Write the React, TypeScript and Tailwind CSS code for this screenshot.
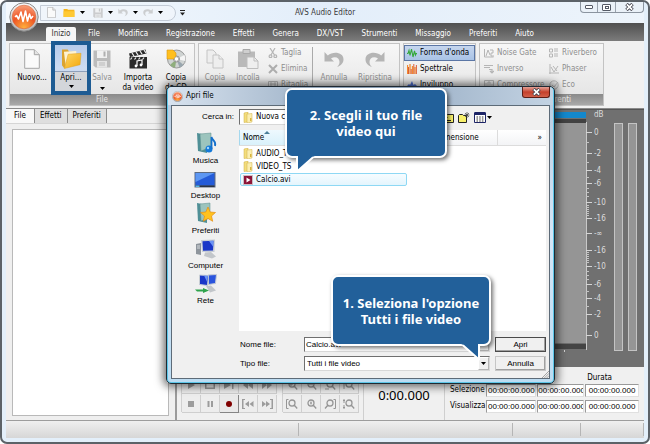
import React, { useState } from 'react';
import clsx from 'clsx';

type IconProps = { className?: string };

function LogoIcon({ className }: IconProps) {
  return (
    <svg viewBox="0 0 30 30" className={className} aria-hidden="true">
      <defs>
        <linearGradient id="ring" x1="0" y1="0" x2="0" y2="1">
          <stop offset="0" stopColor="#fafafa" />
          <stop offset="1" stopColor="#b4b4b4" />
        </linearGradient>
        <radialGradient id="orange" cx="0.5" cy="0.95" r="0.95">
          <stop offset="0" stopColor="#ffb03c" />
          <stop offset="0.55" stopColor="#ee5424" />
          <stop offset="1" stopColor="#f9a27c" />
        </radialGradient>
      </defs>
      <circle cx="15" cy="15" r="14.2" fill="url(#ring)" stroke="#8a8a8a" />
      <circle cx="15" cy="15" r="11.8" fill="url(#orange)" stroke="#d8643a" strokeWidth="0.6" />
      <path d="M6 15l1.500-1.500L9.500 17l2.500-7 2 9.500L16.500 9l2 10 2-7 1.500 4.500L24 14" fill="none" stroke="#fff" strokeWidth="1.6" strokeLinejoin="round" />
    </svg>
  );
}

function PageIcon({ className }: IconProps) {
  return (
    <svg viewBox="0 0 16 20" className={className} aria-hidden="true">
      <path d="M.7.7h9.6l5 5v13.6H.7z" fill="#fafafa" stroke="#a5a5a5" />
      <path d="M10.3.7v5h5" fill="#e4e4e4" stroke="#a5a5a5" />
    </svg>
  );
}

function CopyIcon({ className }: IconProps) {
  return (
    <svg viewBox="0 0 18 20" className={className} fill="#eee" stroke="#c4c4c4" aria-hidden="true">
      <path d="M1 1h6l3 3v10H1z" />
      <path d="M7 6h6l4 4v9H7z" />
      <path d="M13 6v4h4" />
    </svg>
  );
}

function PasteIcon({ className }: IconProps) {
  return (
    <svg viewBox="0 0 22 20" className={className} aria-hidden="true">
      <path d="M1 2.5h17V18H1z" fill="#b9b9b9" />
      <path d="M6 .5h7v4H6z" fill="#cfcfcf" stroke="#a8a8a8" />
      <path d="M10 8h7l4 4v7.5H10z" fill="#eee" stroke="#bdbdbd" />
      <path d="M17 8v4h4" fill="none" stroke="#bdbdbd" />
    </svg>
  );
}

function OpenFolderIcon({ className }: IconProps) {
  return (
    <svg viewBox="0 0 22 21" className={className} aria-hidden="true">
      <defs>
        <linearGradient id="folder" x1="0" y1="0" x2="1" y2="1">
          <stop offset="0" stopColor="#ffd766" />
          <stop offset="1" stopColor="#f2a70c" />
        </linearGradient>
      </defs>
      <path d="M1 .5h6l1.500 2.500H12L3.500 20.500 1 17z" fill="#dba431" />
      <path d="M3 3l13-1v4L5 19z" fill="#fff3d0" />
      <path d="M7.500 5.500L21 4.500l-1 12L3.500 20.500z" fill="url(#folder)" stroke="#e0a01c" strokeWidth="0.5" />
    </svg>
  );
}

function FolderIcon({ className }: IconProps) {
  return (
    <svg viewBox="0 0 12 10" className={className} aria-hidden="true">
      <path d="M0 1h4l1 1h7v8H0z" fill="#f6b51a" />
      <path d="M0 3.500h12V10H0z" fill="#ffc933" />
    </svg>
  );
}

function ListFolderIcon({ className }: IconProps) {
  return (
    <svg viewBox="0 0 10 11" className={className} aria-hidden="true">
      <path d="M1 1l4-1v10l-4 .5z" fill="#f3dd7c" stroke="#cfae45" strokeWidth="0.5" />
      <path d="M4 2l5-.5V10l-5 1z" fill="#fbeeb0" stroke="#cfae45" strokeWidth="0.5" />
      <path d="M7 6h1.500v3H7z" fill="#d8b440" />
    </svg>
  );
}

function DiskIcon({ className }: IconProps) {
  return (
    <svg viewBox="0 0 18 18" className={className} aria-hidden="true">
      <path d="M.5.5h17v17H2.500l-2-2z" fill="#bcbcbc" />
      <path d="M4 .5h10v7.500H4z" fill="#f1f1f1" />
      <path d="M10.500 1.500h2v5h-2z" fill="#b0b0b0" />
      <path d="M4 11h10v6.500H4z" fill="#e4e4e4" />
      <path d="M6 13h6M6 15h6" stroke="#bbb" />
    </svg>
  );
}

function ClapperIcon({ className }: IconProps) {
  return (
    <svg viewBox="0 0 20 20" className={className} aria-hidden="true">
      <path d="M1 4.500L17.500.5l1 4L2 8z" fill="#2b2b2b" />
      <path d="M4 4l2 3M8 3l2 3M12 2l2 3M16 1l2 3" stroke="#f0f0f0" strokeWidth="1.300" />
      <path d="M1.500 8H19v11.500H1.500z" fill="#2b2b2b" />
      <path d="M4 8.500l-1.500 2M8 8.500l-1.500 2M12 8.500l-1.500 2M16 8.500l-1.500 2" stroke="#f0f0f0" strokeWidth="1.200" />
      <path d="M9 17v-5l5-1v5" fill="none" stroke="#fff" strokeWidth="1.200" />
      <circle cx="8" cy="17" r="1.400" fill="#fff" />
      <circle cx="13" cy="16" r="1.400" fill="#fff" />
    </svg>
  );
}

function DiscIcon({ className }: IconProps) {
  return (
    <svg viewBox="0 0 20 20" className={className} aria-hidden="true">
      <circle cx="10.500" cy="10" r="9" fill="#cfd3d2" stroke="#858585" strokeWidth="0.8" />
      <path d="M10.500 10L4 16a9 9 0 005 2.800z" fill="#8fae7c" />
      <path d="M10.500 10l8-4a9 9 0 01.8 6z" fill="#f5f5f5" />
      <path d="M10.500 10l7 6a9 9 0 01-4 2.500z" fill="#99a6ae" />
      <circle cx="10.500" cy="10" r="3" fill="#f4f4f4" stroke="#909090" />
      <path d="M1 1h6l3 3v6H1z" fill="#ffbf1f" stroke="#d79512" strokeWidth="0.6" />
      <circle cx="10.500" cy="10" r="2.200" fill="#fff" stroke="#888" strokeWidth="0.6" />
    </svg>
  );
}

function ArrowTurn({ className, flip }: IconProps & { flip?: boolean }) {
  return (
    <svg viewBox="0 0 20 17" className={clsx(className, flip && '-scale-x-100')} aria-hidden="true">
      <path d="M.5 1v9.500H10L7 7.500C10.500 5 15.500 6 15.500 11c0 2-1 3.800-2.500 5 4-1.200 6.500-4 6.500-7.500C19.500 1 9 0 3.800 4.500z" fill="#b5b5b5" />
    </svg>
  );
}

function Caret({ className }: IconProps) {
  return (
    <svg viewBox="0 0 5 3" className={clsx('h-[3px] w-[5px] shrink-0', className)} aria-hidden="true">
      <path d="M0 0h5L2.500 3z" fill="currentColor" />
    </svg>
  );
}

function CloseGlyph({ className }: IconProps) {
  return (
    <svg viewBox="0 0 9 8" className={className} aria-hidden="true">
      <path d="M1.500 1l6 6M7.500 1l-6 6" stroke="#42424c" strokeWidth="3.400" />
      <path d="M1.800 1.300l5.400 5.400M7.200 1.300L1.800 6.700" stroke="#fff" strokeWidth="1.700" />
    </svg>
  );
}

const SMALL_ICONS: Record<string, React.ReactNode> = {
  cut: (
    <g fill="none" stroke="#b5b5b5" strokeWidth="1.200">
      <path d="M2 0l4.500 7M7 0L3 7" />
      <circle cx="2.500" cy="8.300" r="1.400" />
      <circle cx="7.300" cy="8.300" r="1.400" />
    </g>
  ),
  remove: <path d="M1 1l8 8M9 1L1 9" stroke="#adadad" strokeWidth="2" />,
  crop: <path d="M.5 1.500h9v7h-9zM2 4h6M3 1v8M7 1v8" fill="none" stroke="#b5b5b5" />,
  wave: <path d="M0 5.500h1l1-3 1 5L4.500 1 6 9l1.500-6L8.500 7l.7-1.500H10" fill="none" stroke="#35a83b" strokeWidth="1.100" />,
  spectrum: (
    <g>
      <path d="M.5 1v9M3 0v10M5.500 2v8M8 3v7" stroke="#f28a2e" strokeWidth="1.300" />
      <path d="M1.500 3v7M4.200 5v5M6.800 0v10M9.400 1v9" stroke="#d94e27" strokeWidth="0.900" />
    </g>
  ),
  envelope: <path d="M0 6l2-2 1 1 2-4 1.500 4 1.500-1 2 2-2 1-1.500 0L5 9 3.500 7 2 7z" fill="#4d6fd0" />,
  gate: <path d="M.5 1v8M2 8l2-6 2 5M6 2h3v3H7v3h3M.5 9h9" fill="none" stroke="#b5b5b5" />,
  inverse: <path d="M0 1.500h9M0 3.500h6M5 5.500h3v3M6 7l2 2 2-2" fill="none" stroke="#b5b5b5" strokeWidth="1.200" />,
  compressor: <path d="M.5.5h9v9h-9zM2 7V3M4 7V2h2v5M8 7V4" fill="none" stroke="#b5b5b5" />,
  reverb: <path d="M.5 1h3v3h-3zM.5 6h3v3h-3zM5 1h4M5 3h4M5 6h4M5 8h4" fill="none" stroke="#b5b5b5" />,
  phaser: <path d="M1 0v10M0 9h10M2 3l3 5 4-6M4 2l4 5" fill="none" stroke="#b5b5b5" />,
  echo: <path d="M5 .8a4.200 4.200 0 110 8.400A4.200 4.200 0 015 .8zM3 5l2 2 4-5" fill="none" stroke="#b5b5b5" />,
};

function SmallIcon({ name }: { name: string }) {
  return (
    <svg viewBox="0 0 10 10" className="h-[10px] w-[10px] shrink-0" aria-hidden="true">
      {SMALL_ICONS[name]}
    </svg>
  );
}

function SmallButton({ icon, label, disabled, active }: { icon: string; label: string; disabled?: boolean; active?: boolean }) {
  return (
    <button
      type="button"
      disabled={disabled}
      className={clsx(
        'flex h-4 items-center gap-[3px] border px-[2px] whitespace-nowrap',
        active ? 'border-[#5b76a5] bg-linear-to-b from-[#c6d6ee] to-[#a9c3e6]' : 'border-transparent',
        disabled ? 'text-[#8e8e8e]' : 'text-black',
      )}
    >
      <SmallIcon name={icon} />
      {label}
    </button>
  );
}

function BigButton({
  icon,
  children,
  disabled,
  className,
  caret,
}: {
  icon: React.ReactNode;
  children: React.ReactNode;
  disabled?: boolean;
  className?: string;
  caret?: boolean;
}) {
  return (
    <button
      type="button"
      disabled={disabled}
      className={clsx(
        'flex shrink-0 flex-col items-center pt-[5px] leading-[10px]',
        disabled ? 'text-[#8e8e8e]' : 'text-black',
        className,
      )}
    >
      <span className="mb-1 flex h-[20px] items-center">{icon}</span>
      {children}
      {caret && <Caret className="mt-1 text-black" />}
    </button>
  );
}

function RibbonGroup({ title, className, children }: { title: string; className?: string; children: React.ReactNode }) {
  return (
    <section className={clsx('flex shrink-0 flex-col border border-[#c3c3c3] bg-linear-to-b from-[#f7f7f7] to-[#e2e2e2]', className)}>
      <div className="flex h-[50px]">{children}</div>
      <h2 className="h-[11px] bg-linear-to-b from-[#8a8a8a] to-[#a9a9a9] text-center leading-[11px] text-[#e8e8e8]">{title}</h2>
    </section>
  );
}

const MENU = [
  'Inizio',
  'File',
  'Modifica',
  'Registrazione',
  'Effetti',
  'Genera',
  'DX/VST',
  'Strumenti',
  'Missaggio',
  'Preferiti',
  'Aiuto',
];

function TitleBar() {
  return (
    <header className="relative flex h-[21px] items-center bg-linear-to-r from-[#f4f9fd] via-[#e3eefa] to-[#edf4fb]">
      <div className="ml-[34px] flex h-[16px] items-center gap-[5px] rounded-r-full border border-[#c3cbd6] bg-[#f0f5fb] pr-3 pl-[6px] text-black">
        <PageIcon className="h-[11px] w-[9px]" />
        <FolderIcon className="ml-[2px] h-[9px] w-[12px]" />
        <Caret />
        <DiskIcon className="ml-[3px] h-[10px] w-[10px] opacity-70" />
        <Caret />
        <ArrowTurn className="h-[9px] w-[10px] opacity-60" />
        <Caret />
        <ArrowTurn flip className="h-[9px] w-[10px] opacity-60" />
        <Caret />
      </div>
      <svg viewBox="0 0 5 6" className="ml-[4px] h-[6px] w-[5px]" aria-hidden="true">
        <path d="M0 .5h5" stroke="#222" />
        <path d="M0 2.500h5L2.500 5.500z" fill="#222" />
      </svg>
      <h1 className="absolute inset-x-0 text-center text-[#3a3a3a]">AVS Audio Editor</h1>
      <div className="absolute top-0 right-0 flex h-[11px] overflow-hidden rounded-b border border-t-0 border-[#8b949f] bg-[#eaf1f8]">
        <button type="button" aria-label="Riduci" className="flex w-[17px] items-center justify-center border-r border-[#9aa3ae]">
          <span className="h-[4px] w-[8px] rounded-[1px] border border-[#555a66] bg-white" />
        </button>
        <button type="button" aria-label="Ingrandisci" className="flex w-[18px] items-center justify-center border-r border-[#9aa3ae]">
          <span className="flex h-[7px] w-[9px] items-center justify-center rounded-[1px] border border-[#555a66] bg-white">
            <span className="h-[3px] w-[4px] border border-[#555a66]" />
          </span>
        </button>
        <button type="button" aria-label="Chiudi" className="flex w-[27px] items-center justify-center">
          <CloseGlyph className="h-[8px] w-[9px]" />
        </button>
      </div>
    </header>
  );
}

function Ribbon() {
  return (
    <>
      <nav className="flex h-[18px] items-end bg-linear-to-b from-[#505050] via-[#656565] to-[#7c7c7c] pl-[40px] text-white">
        {MENU.map((label, i) => (
          <button
            key={label}
            type="button"
            className={clsx(
              'h-[14px] shrink-0 whitespace-nowrap',
              i === 0 ? 'mr-[3px] w-[30px] rounded-t-xs bg-[#f6f6f6] text-[#333]' : 'px-[9px]',
            )}
          >
            {label}
          </button>
        ))}
      </nav>
      <div className="flex gap-[3px] overflow-hidden border-b border-[#8a8a8a] bg-[#f1f1f1] px-[3px] pt-[2px] pb-[2px]">
        <RibbonGroup title="File" className="w-[186px]">
          <BigButton className="w-[44px]" icon={<PageIcon className="h-[20px] w-[16px]" />}>
            Nuovo...
          </BigButton>
          <div className="relative w-[34px]">
            <button
              type="button"
              className="absolute -top-[3px] -left-[3px] z-10 flex h-[54px] w-[40px] flex-col items-center border-4 border-[#1d5b93] bg-linear-to-b from-[#b7cbea] via-[#cddcf2] to-[#c8d3e0] leading-[10px] text-black"
            >
              <span className="mt-[3px] mb-[2px] flex h-[21px] items-center">
                <OpenFolderIcon className="h-[20px] w-[21px]" />
              </span>
              <span className="w-full flex-1 border-t border-[#8ea0ba] bg-[#d3d6da] pt-[1px]">
                Apri...
                <Caret className="mx-auto mt-[2px]" />
              </span>
            </button>
          </div>
          <BigButton disabled caret className="w-[28px]" icon={<DiskIcon className="h-[18px] w-[18px]" />}>
            Salva
          </BigButton>
          <BigButton className="w-[44px]" icon={<ClapperIcon className="h-[20px] w-[20px]" />}>
            Importa
            <br />
            <span>da video</span>
          </BigButton>
          <BigButton className="w-[32px]" icon={<DiscIcon className="h-[20px] w-[20px]" />}>
            Copia
            <br />
            <span>da CD</span>
          </BigButton>
        </RibbonGroup>

        <RibbonGroup title="Modifica" className="w-[202px]">
          <BigButton disabled className="w-[32px]" icon={<CopyIcon className="h-[20px] w-[18px]" />}>
            Copia
          </BigButton>
          <BigButton disabled className="w-[34px]" icon={<PasteIcon className="h-[20px] w-[22px]" />}>
            Incolla
          </BigButton>
          <div className="flex w-[47px] flex-col pt-[1px]">
            <SmallButton disabled icon="cut" label="Taglia" />
            <SmallButton disabled icon="remove" label="Elimina" />
            <SmallButton disabled icon="crop" label="Ritaglia" />
          </div>
          <div className="my-[3px] w-px bg-[#aaa]" />
          <BigButton disabled className="w-[42px]" icon={<ArrowTurn className="h-[17px] w-[20px]" />}>
            Annulla
          </BigButton>
          <BigButton disabled className="w-[40px]" icon={<ArrowTurn flip className="h-[17px] w-[20px]" />}>
            Ripristina
          </BigButton>
        </RibbonGroup>

        <RibbonGroup title="Visualizza" className="w-[73px]">
          <div className="flex w-full flex-col pt-[1px]">
            <SmallButton active icon="wave" label="Forma d'onda" />
            <SmallButton icon="spectrum" label="Spettrale" />
            <SmallButton icon="envelope" label="Inviluppo" />
          </div>
        </RibbonGroup>

        <RibbonGroup title="Effetti preferenti" className="w-[125px]">
          <div className="flex w-[66px] flex-col pt-[1px] pl-[1px]">
            <SmallButton disabled icon="gate" label="Noise Gate" />
            <SmallButton disabled icon="inverse" label="Inverso" />
            <SmallButton disabled icon="compressor" label="Compressore" />
          </div>
          <div className="flex flex-col pt-[1px]">
            <SmallButton disabled icon="reverb" label="Riverbero" />
            <SmallButton disabled icon="phaser" label="Phaser" />
            <SmallButton disabled icon="echo" label="Eco" />
          </div>
        </RibbonGroup>
      </div>
    </>
  );
}

function FilesPanel() {
  const [tab, setTab] = useState('File');

  return (
    <aside className="flex w-[171px] shrink-0 flex-col border-r-2 border-[#9b9b9b] bg-[#efefef]">
      <div role="tablist" className="flex h-[15px] border-b border-[#d5d5d5] text-black">
        {['File', 'Effetti', 'Preferiti'].map((name) => (
          <button
            key={name}
            type="button"
            role="tab"
            aria-selected={tab === name}
            onClick={() => setTab(name)}
            className={clsx('border-r border-[#8c8c8c]', tab === name ? 'bg-[#f8f8f8] px-[8px]' : 'bg-[#dedede] px-[5px]')}
          >
            {name}
          </button>
        ))}
      </div>
      <div className="mx-[6px] mt-[5px] mb-[4px] flex-1 border border-[#b9b9b9] bg-white" />
    </aside>
  );
}

const DB_LABELS = [
  { y: 5, text: 'dB' },
  { y: 23, text: '0' },
  { y: 44, text: '-2' },
  { y: 61, text: '-4' },
  { y: 74, text: '-6' },
  { y: 93, text: '-10' },
  { y: 109, text: '-16' },
  { y: 124, text: '-∞' },
  { y: 141, text: '-16' },
  { y: 157, text: '-10' },
  { y: 175, text: '-6' },
  { y: 189, text: '-4' },
  { y: 205, text: '-2' },
  { y: 226, text: '0' },
];

const DB_MINOR = [33, 53, 68, 79, 83, 87, 96, 98, 100, 102, 104, 106, 143, 145, 147, 149, 151, 153, 162, 166, 170, 182, 197, 215];

function DecibelScale() {
  return (
    <svg viewBox="0 0 28 257" className="h-[257px] w-[28px] shrink-0" role="img" aria-label="dB">
      <path d="M.5 12v228" stroke="#c9c9c9" />
      {DB_LABELS.map((l, i) => (
        <g key={i}>
          {i > 0 && <path d={`M0 ${l.y - 0.5}h6`} stroke="#d6d6d6" />}
          <text x="8" y={l.y + 2} fontSize="8" fill="#dcdcdc">
            {l.text}
          </text>
        </g>
      ))}
      {DB_MINOR.map((y) => (
        <path key={y} d={`M0 ${y - 0.5}h3`} stroke="#c4c4c4" />
      ))}
    </svg>
  );
}

function WaveView() {
  return (
    <div className="flex h-[258px] border-t border-[#555] bg-[#707070]">
      <div className="flex flex-1 flex-col">
        <div className="mt-[2px] h-[6px] bg-[#1488cc]" />
        <div className="mt-[1px] h-[4px] bg-[#424242]" />
        <div className="h-[220px] bg-[#959595]" />
        <div className="mt-[1px] h-[5px] bg-[#444]" />
        <div className="mt-[1px] mr-[21px] ml-auto h-[2px] w-px bg-[#d0d0d0]" />
      </div>
      <DecibelScale />
      <div className="mt-[13px] mr-[7px] flex h-[228px] gap-[5px]">
        <div className="w-[9px] border border-[#c4c4c4] bg-[#959595]" />
        <div className="w-[9px] border border-[#c4c4c4] bg-[#959595]" />
      </div>
    </div>
  );
}

const TRANSPORT = [
  { label: 'Riproduci', d: 'M3 1l7 4-7 4z' },
  { label: 'Riproduci ciclo', d: 'M1 1h10v8H1zM2.500 2.500v5h7v-5z' },
  { label: 'Fine', d: 'M1 1l7 4-7 4zM9 1h1.500v8H9z' },
  { label: 'Indietro', d: 'M6 1v8L1 5zM11 1v8L6 5z' },
  { label: 'Avanti', d: 'M1 1l5 4-5 4zM6 1l5 4-5 4z' },
  { label: 'Arresta', d: 'M3 2h6v6H3z' },
  { label: 'Pausa', d: 'M3.500 2h2v6h-2zM7 2h2v6H7z' },
  { label: 'Registra', d: 'M6 2a3 3 0 110 6 3 3 0 010-6z' },
  { label: 'Inizio selezione', d: 'M0 0h3v1H1.500v8H3v1H0zM7 2v6L3 5zM11.500 2v6l-4-3z' },
  { label: 'Fine selezione', d: 'M12 0H9v1h1.500v8H9v1h3zM1 2l4 3-4 3zM5 2l4 3-4 3z' },
];

const ZOOMS = [
  { label: 'Zoom avanti', d: 'M3 4h4M5 2v4' },
  { label: 'Zoom indietro', d: 'M4 4h4' },
  { label: 'Zoom selezione', d: 'M1 9h4' },
  { label: 'Zoom verticale', d: 'M1 1v8' },
  { label: 'Zoom inizio', d: 'M2.500 .5h-2v9h2' },
  { label: 'Zoom uno a uno', d: 'M5 4h2M6 2.500v3' },
  { label: 'Zoom fine', d: 'M9.500 .5h2v9h-2' },
  { label: 'Zoom verticale indietro', d: 'M0 1.500h2M1 0v4M0 8.500h2M1 6v4' },
];

function ToolCell({ label, raised, children }: { label: string; raised?: boolean; children: React.ReactNode }) {
  return (
    <button
      type="button"
      aria-label={label}
      className={clsx(
        'flex h-[18px] w-[19px] items-center justify-center border-r border-b',
        raised ? 'border-[#858585] bg-[#e9e9e9]' : 'border-[#cfcfcf] bg-[#ededed]',
      )}
    >
      {children}
    </button>
  );
}

const TIMES = ['00:00:00.000', '00:00:00.000', '00:00:00.000'];

function ControlBar() {
  return (
    <div className="flex flex-1 bg-[#f0f0f0]">
      <div className="mt-[8px] ml-[4px] grid h-[37px] grid-cols-5 gap-y-[1px] border-t border-l border-[#d0d0d0]">
        {TRANSPORT.map((b) => (
          <ToolCell key={b.label} label={b.label} raised={b.label === 'Registra'}>
            <svg viewBox="0 0 12 10" className="h-[10px] w-[12px]" aria-hidden="true">
              <path d={b.d} fill={b.label === 'Registra' ? '#800000' : '#9c9c9c'} fillRule="evenodd" />
            </svg>
          </ToolCell>
        ))}
      </div>
      <div className="mt-[8px] ml-[5px] grid h-[37px] grid-cols-4 gap-y-[1px] border-t border-l border-[#d0d0d0]">
        {ZOOMS.map((b, i) => (
          <ToolCell key={b.label} label={b.label}>
            <svg viewBox="0 0 12 10" className="h-[10px] w-[12px]" fill="none" stroke="#969696" aria-hidden="true">
              {i === 6 ? (
                <path d="M6 1a3 3 0 110 6 3 3 0 010-6zM4 6L1 9.500" strokeWidth="1.300" />
              ) : (
                <path d="M6 1a3 3 0 110 6 3 3 0 010-6zM8.200 6l3 3.500" strokeWidth="1.300" />
              )}
              <path d={b.d} />
            </svg>
          </ToolCell>
        ))}
      </div>
      <div className="ml-[4px] flex w-[82px] shrink-0 items-start justify-center border-x border-[#cfcfcf] pt-[19px] font-['Noto_Sans',sans-serif] text-[13px] leading-[18px] text-black">
        0:00.000
      </div>
      <table className="mt-[6px] ml-[2px] min-w-0 flex-1 table-fixed self-start border-separate border-spacing-x-[1px] border-spacing-y-0 text-left text-black">
        <thead>
          <tr className="h-[9px] leading-[9px]">
            <th className="w-[37px] p-0" aria-label="Intervallo" />
            <th className="p-0 pl-[2px] font-normal">Inizio</th>
            <th className="p-0 pl-[2px] font-normal">Fine</th>
            <th className="p-0 pl-[2px] font-normal">Durata</th>
          </tr>
        </thead>
        <tbody>
          {['Selezione', 'Visualizza'].map((row) => (
            <tr key={row} className="h-[16px]">
              <th className="p-0 pl-[2px] font-normal">{row}</th>
              {TIMES.map((time, i) => (
                <td key={i} className="p-0">
                  <input
                    aria-label={`${row} ${i + 1}`}
                    defaultValue={time}
                    className="block h-[13px] w-full border border-[#e0e0e0] border-t-[#9a9a9a] border-l-[#9a9a9a] bg-white text-center font-['Liberation_Sans',sans-serif]"
                  />
                </td>
              ))}
            </tr>
          ))}
        </tbody>
      </table>
      <div className="w-[4px]" />
    </div>
  );
}

function MusicIcon() {
  return (
    <svg viewBox="0 0 22 22" className="h-[22px] w-[22px]" aria-hidden="true">
      <path d="M2 1l10 2v18L3 19z" fill="#4f8f96" />
      <path d="M5 2l11-1v14L6 19z" fill="#9cc4bd" stroke="#5b8d8b" strokeWidth="0.500" />
      <circle cx="14" cy="17" r="3.500" fill="#1479d8" />
      <path d="M16.500 17V5c1 4 5 4 3.500 9" fill="none" stroke="#1470cc" strokeWidth="1.800" />
      <circle cx="13" cy="16" r="1.200" fill="#9fd4ff" />
    </svg>
  );
}

function DesktopIcon() {
  return (
    <svg viewBox="0 0 22 18" className="h-[18px] w-[22px]" aria-hidden="true">
      <path d="M.5 1h21v15.500H.5z" fill="#5c6a80" />
      <path d="M1.500 2h19v12.500h-19z" fill="#245bd8" />
      <path d="M1.500 2h19L1.500 11z" fill="#5d97f2" />
      <path d="M1.500 14.500h19v1.500h-19z" fill="#2b3445" />
      <path d="M1.500 14.500h4v1.500h-4z" fill="#58b7e8" />
    </svg>
  );
}

function FavoritesIcon() {
  return (
    <svg viewBox="0 0 22 22" className="h-[22px] w-[22px]" aria-hidden="true">
      <path d="M2 1l10 2v18L3 19z" fill="#4f8f96" />
      <path d="M5 2l10-1v15L6 19z" fill="#9cc4bd" stroke="#5b8d8b" strokeWidth="0.500" />
      <path d="M13 5l2.200 5 5.300.500-4 3.500 1.200 5.300L13 16.500l-4.700 2.800L9.500 14l-4-3.500 5.300-.5z" fill="#ffc21f" stroke="#e58e12" strokeWidth="0.700" />
    </svg>
  );
}

function ComputerIcon() {
  return (
    <svg viewBox="0 0 22 20" className="h-[20px] w-[22px]" aria-hidden="true">
      <path d="M1 5l5-1v12l-5-1z" fill="#8e959c" />
      <path d="M2 7h3M2 9h3" stroke="#d5d9dd" />
      <path d="M6 1l14-.5-.5 12.500L7 13z" fill="#c7cdd4" />
      <path d="M7.500 2.200l11-.4-.5 9.700L8 11.800z" fill="#1a37c8" />
      <path d="M14 2l4.500-.2-.3 6z" fill="#6b93f5" />
      <path d="M10 13.500l6-.5 5 4.500-4 2-8-2.500z" fill="#c2c6ca" />
    </svg>
  );
}

function NetworkIcon() {
  return (
    <svg viewBox="0 0 22 20" className="h-[20px] w-[22px]" aria-hidden="true">
      <path d="M13 1l8.500-.5-1 9-7 1z" fill="#2a54dd" stroke="#c7cdd4" />
      <path d="M4.500 1l9 .5-1 10-8-1z" fill="#1a37c8" stroke="#c7cdd4" />
      <path d="M9 1.500l4 .2-1 6z" fill="#6b93f5" />
      <path d="M11 12l5-.5 5 5-6 2z" fill="#c2c6ca" />
      <path d="M0 15.500h8V14l6 2.500L8 19v-1.500H2z" fill="#2fa34c" />
    </svg>
  );
}

const PLACES = [
  { label: 'Musica', icon: <MusicIcon /> },
  { label: 'Desktop', icon: <DesktopIcon /> },
  { label: 'Preferiti', icon: <FavoritesIcon /> },
  { label: 'Computer', icon: <ComputerIcon /> },
  { label: 'Rete', icon: <NetworkIcon /> },
];

function VideoFileIcon({ className }: IconProps) {
  return (
    <svg viewBox="0 0 10 10" className={className} aria-hidden="true">
      <path d="M.5.500h9v9h-9z" fill="#8d1538" stroke="#c9bfc3" />
      <path d="M3.500 2.500l4 2.500-4 2.500z" fill="#fff" />
    </svg>
  );
}

const FILES = ['AUDIO_TS', 'VIDEO_TS', 'Calcio.avi'];

const FIELD = 'h-[15px] min-w-0 flex-1 border border-[#d8d8d8] border-t-[#6f6f6f] border-l-[#6f6f6f] bg-white';
const DIALOG_BUTTON = 'h-[15px] w-[51px] border bg-[#f0f0f0] shadow-[inset_-1px_-1px_0_#a0a0a0]';

function DropArrow() {
  return (
    <span className="pointer-events-none absolute top-[1px] right-[1px] flex h-[13px] w-[11px] items-center justify-center border border-[#b5b5b5] border-t-white border-l-white bg-[#f0f0f0]">
      <Caret />
    </span>
  );
}

function OpenDialog() {
  const [selected, setSelected] = useState('Calcio.avi');

  return (
    <div
      role="dialog"
      aria-label="Apri file"
      className="absolute top-[84px] left-[164px] w-[389px] rounded-[5px] border border-[#1f2a33] bg-linear-to-b from-[#b8cbe0] via-[#d5e6f7] to-[#bcdcf2] px-[4px] pb-[4px] text-black shadow-[0_0_8px_3px_rgba(0,0,0,0.55),inset_0_0_0_1px_#5cc6e8]"
    >
      <div className="-mx-[3px] flex h-[18px] items-center rounded-t-[4px] bg-linear-to-r from-[#d8e3ef] via-[#8fa5bd] to-[#c3d3e3] pr-[3px] pl-[4px]">
        <LogoIcon className="h-[11px] w-[11px]" />
        <h2 className="ml-[3px] flex-1">Apri file</h2>
        <button
          type="button"
          aria-label="Chiudi"
          className="mb-auto flex h-[11px] w-[28px] items-center justify-center rounded-b-[3px] border border-t-0 border-[#5c1d16] bg-linear-to-b from-[#e2a096] via-[#c4402c] to-[#d2604a]"
        >
          <CloseGlyph className="h-[8px] w-[9px]" />
        </button>
      </div>
      <div className="flex h-[274px] border border-[#5d6b78] bg-[#f0f0f0] pr-[3px] font-['Liberation_Sans',sans-serif]">
        <div className="flex w-[67px] shrink-0 flex-col">
          <label htmlFor="look-in" className="mt-[5px] h-[20px] pr-[5px] text-right">
            Cerca in:
          </label>
          <div className="flex flex-col items-center">
            {PLACES.map((place) => (
              <button key={place.label} type="button" className="flex h-[35px] flex-col items-center justify-end leading-[10px]">
                {place.icon}
                <span className="mt-[2px]">{place.label}</span>
              </button>
            ))}
          </div>
        </div>
        <div className="flex min-w-0 flex-1 flex-col">
          <div className="mt-[3px] flex h-[16px] items-center">
            <div className="relative w-[196px]">
              <select
                id="look-in"
                className="block h-[16px] w-full appearance-none border border-[#d8d8d8] border-t-[#6f6f6f] border-l-[#6f6f6f] bg-white pl-[16px] font-['DejaVu_Sans_Condensed',sans-serif] text-[8px]"
              >
                <option>Nuova cartella</option>
              </select>
              <ListFolderIcon className="absolute top-[3px] left-[4px] h-[11px] w-[10px]" />
              <DropArrow />
            </div>
            <button type="button" aria-label="Cartella superiore" className="ml-[7px]">
              <svg viewBox="0 0 12 11" className="h-[11px] w-[12px]" aria-hidden="true">
                <path d="M.5 10.500v-8l1-1h3l1 1h6v8z" fill="#f8f06a" stroke="#222" />
                <path d="M4 8.500h5M4 8.500v-4M2.500 6L4 4.500 5.500 6" fill="none" stroke="#222" />
              </svg>
            </button>
            <button type="button" aria-label="Nuova cartella" className="ml-[4px]">
              <svg viewBox="0 0 12 11" className="h-[11px] w-[12px]" aria-hidden="true">
                <path d="M.5 10.500v-7l1-1h3l1 1h3v7z" fill="#f8f06a" stroke="#222" />
                <path d="M9 0v6M6.500 3h5M7 1l4 4M11 1L7 5" stroke="#444" strokeWidth="0.700" />
              </svg>
            </button>
            <button type="button" aria-label="Visualizza" className="ml-[4px] flex items-center gap-[1px]">
              <svg viewBox="0 0 12 11" className="h-[11px] w-[12px]" aria-hidden="true">
                <path d="M.5 1h11v9.500H.5z" fill="#fff" stroke="#1d2466" />
                <path d="M.5 0h11v3H.5z" fill="#1d2466" />
                <path d="M2.500 5h7M2.500 7h7M2.500 9h7" stroke="#333" strokeDasharray="1.500 1.200" />
              </svg>
              <Caret />
            </button>
          </div>
          <div className="mt-[5px] h-[205px] bg-white font-['DejaVu_Sans_Condensed',sans-serif] text-[8px]">
            <div className="flex h-[16px] items-center border-b border-[#dcdcdc] bg-linear-to-b from-white to-[#f3f4f6]">
              <div className="relative flex h-full w-[168px] items-center border-x border-[#a5d8ee] bg-linear-to-b from-[#eef9fe] to-[#d9f1fb] pl-[3px]">
                Nome
                <svg viewBox="0 0 6 3" className="absolute top-[1px] left-[24px] h-[3px] w-[6px]" aria-hidden="true">
                  <path d="M0 3l3-3 3 3z" fill="#4a7f99" />
                </svg>
              </div>
              <div className="flex h-full w-[91px] items-center border-r border-[#dcdcdc] pl-[29px]">Dimensione</div>
              <span className="ml-auto pr-[4px]">»</span>
            </div>
            <ul className="pt-[1px]">
              {FILES.map((file) => (
                <li key={file} className="pl-[1px]">
                  <button
                    type="button"
                    onClick={() => setSelected(file)}
                    className={clsx(
                      'flex h-[13px] w-[167px] items-center gap-[3px] rounded-xs border pl-[2px]',
                      selected === file ? 'border-[#8ed8f4] bg-linear-to-b from-[#f6fcff] to-[#e4f5fd]' : 'border-transparent',
                    )}
                  >
                    {file.endsWith('.avi') ? <VideoFileIcon className="h-[10px] w-[10px]" /> : <ListFolderIcon className="h-[11px] w-[10px]" />}
                    {file}
                  </button>
                </li>
              ))}
            </ul>
          </div>
          <form className="mt-[6px] flex flex-col gap-[4px]" onSubmit={(e) => e.preventDefault()}>
            <div className="flex items-center">
              <label htmlFor="file-name" className="w-[65px] pl-[1px]">
                Nome file:
              </label>
              <div className="relative flex flex-1">
                <input id="file-name" type="text" defaultValue="Calcio.avi" className={clsx(FIELD, 'pl-[1px]')} />
                <DropArrow />
              </div>
              <button type="submit" className={clsx(DIALOG_BUTTON, 'ml-[5px] border-[#4b4b4b]')}>
                Apri
              </button>
            </div>
            <div className="flex items-center">
              <label htmlFor="file-type" className="w-[65px] pl-[1px]">
                Tipo file:
              </label>
              <div className="relative flex flex-1">
                <select id="file-type" className={clsx(FIELD, 'appearance-none pl-[2px]')}>
                  <option>Tutti i file video</option>
                </select>
                <DropArrow />
              </div>
              <button type="button" className={clsx(DIALOG_BUTTON, 'ml-[5px] border-[#c6c6c6]')}>
                Annulla
              </button>
            </div>
          </form>
          <svg viewBox="0 0 9 9" className="-mr-[3px] mt-auto ml-auto h-[7px] w-[7px] shrink-0" aria-hidden="true">
            <path d="M0 9l9-9M3 9l6-6M6 9l3-3" stroke="#8c8c8c" />
          </svg>
        </div>
      </div>
    </div>
  );
}

function Callout({ className, tail, children }: { className: string; tail: 'left' | 'right'; children: React.ReactNode }) {
  return (
    <div
      className={clsx(
        "absolute flex items-center justify-center rounded-[7px] border-2 border-white bg-[#22609a] px-[7px] text-center font-['Noto_Sans',sans-serif] text-[13px] leading-[16px] font-bold text-white shadow-[2px_2px_4px_rgba(0,0,0,0.55)]",
        className,
      )}
    >
      <p>{children}</p>
      <svg
        viewBox="0 0 22 20"
        className={clsx('absolute -bottom-[18px] h-[20px] w-[22px]', tail === 'left' ? 'left-[9px]' : 'right-[9px] -scale-x-100')}
        aria-hidden="true"
      >
        <path d="M1 2v15.500L18.500 2" fill="#22609a" stroke="#fff" strokeWidth="2" strokeLinejoin="round" />
        <path d="M2 0h17v1.500l-1 1H2z" fill="#22609a" />
      </svg>
    </div>
  );
}

export default function App() {
  return (
    <div className="relative flex min-h-screen w-full flex-col overflow-hidden rounded-[7px] border-2 border-[#5c6268] bg-[#e3effa] px-[4px] pb-[4px] font-['DejaVu_Sans_Condensed','DejaVu_Sans',sans-serif] text-[8px] leading-[12px] text-[#222]">
      <TitleBar />
      <Ribbon />
      <div className="flex flex-1">
        <FilesPanel />
        <main className="flex min-w-0 flex-1 flex-col">
          <WaveView />
          <ControlBar />
        </main>
      </div>
      <footer className="flex h-[18px] border-t border-[#9d9d9d] bg-linear-to-b from-[#f0f0f0] to-[#d6d6d6] py-[2px]">
        <div className="flex-1 border-r border-[#b5b5b5]" />
        <div className="w-[214px] border-r border-[#b5b5b5]" />
        <div className="w-[68px] border-r border-[#b5b5b5]" />
        <div className="w-[63px] border-r border-[#b5b5b5]" />
      </footer>

      <LogoIcon className="absolute top-0 left-[7px] h-[30px] w-[30px]" />
      <OpenDialog />
      <Callout tail="left" className="top-[86px] left-[283px] h-[70px] w-[162px]">
        2. Scegli il tuo file video qui
      </Callout>
      <Callout tail="right" className="top-[273px] left-[329px] h-[71px] w-[160px]">
        1. Seleziona l'opzione Tutti i file video
      </Callout>
    </div>
  );
}
